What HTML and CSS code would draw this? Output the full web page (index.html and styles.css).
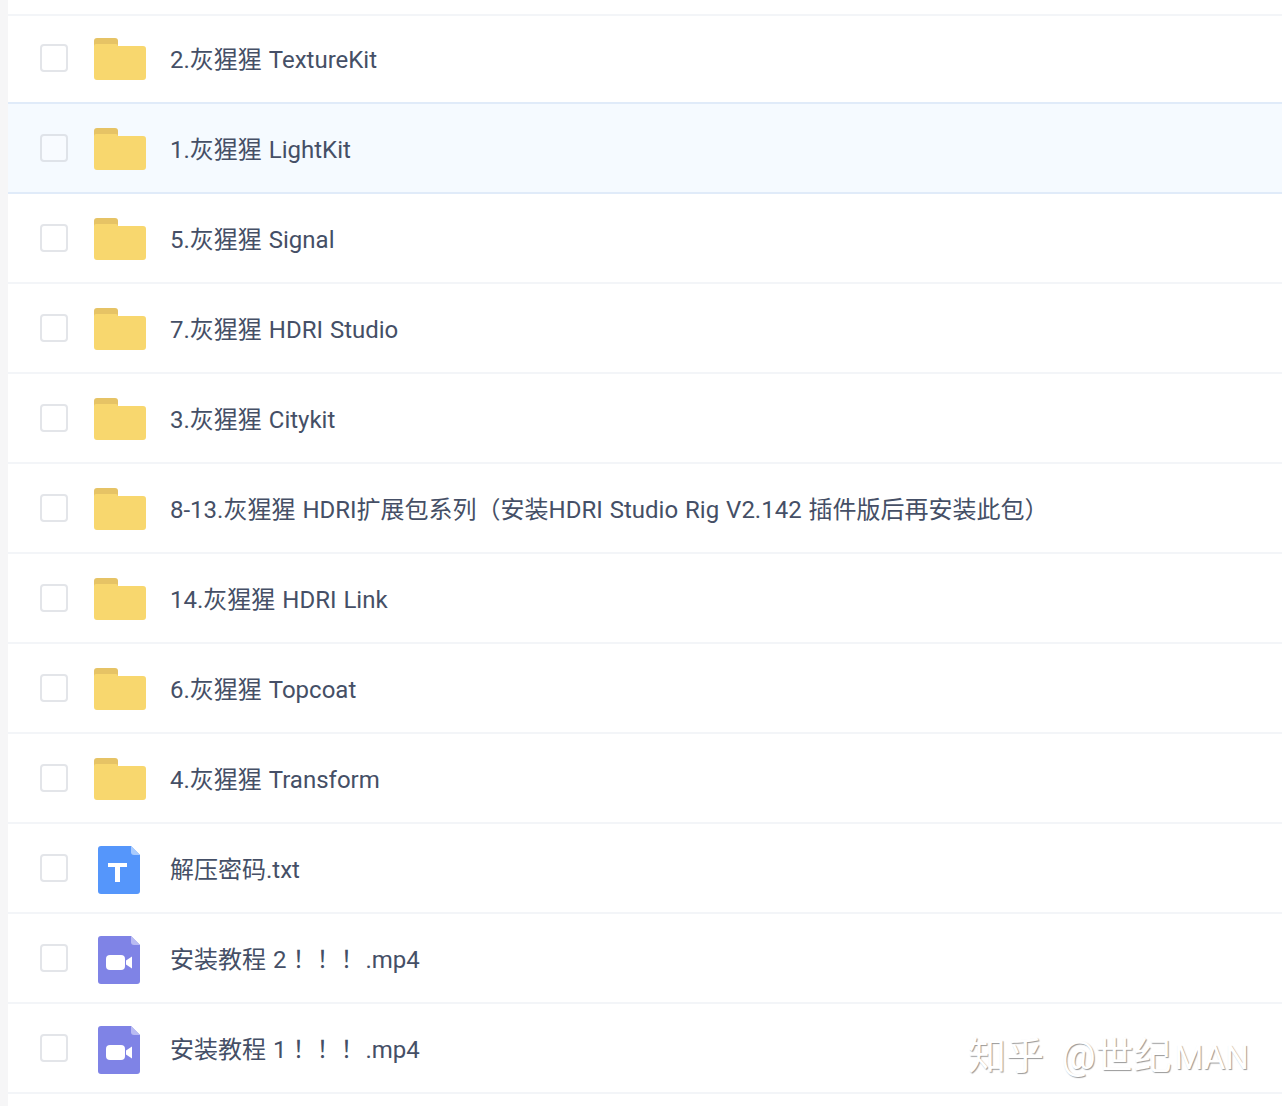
FILE: index.html
```html
<!DOCTYPE html>
<html lang="en">
<head>
    <meta charset="UTF-8">
    <meta name="viewport" content="width=device-width, initial-scale=1.0">
    <title>文件列表</title>
    <link rel="stylesheet" href="styles.css">
</head>
<body>
    <svg class="defs" width="0" height="0">
        <symbol id="folder" viewBox="0 0 52 42">
            <path d="M0 3a3 3 0 0 1 3-3h18a3 3 0 0 1 3 3v5H0z" fill="#e6c365"/>
            <path d="M0 8a2 2 0 0 1 2-2h20a2 2 0 0 1 2 2h25a3 3 0 0 1 3 3v28a3 3 0 0 1-3 3H3a3 3 0 0 1-3-3z" fill="#f8d76e"/>
        </symbol>
        <symbol id="txt" viewBox="0 0 42 48">
            <path d="M3 0h30l9 9v36a3 3 0 0 1-3 3H3a3 3 0 0 1-3-3V3a3 3 0 0 1 3-3z" fill="#5596fb"/>
            <path d="M33 0l9 9h-6a3 3 0 0 1-3-3z" fill="#a9cbfd"/>
            <path d="M10 17h19v4h-7v15h-5V21h-7z" fill="#fff"/>
        </symbol>
        <symbol id="video" viewBox="0 0 42 48">
            <path d="M3 0h30l9 9v36a3 3 0 0 1-3 3H3a3 3 0 0 1-3-3V3a3 3 0 0 1 3-3z" fill="#7f83e6"/>
            <path d="M33 0l9 9h-6a3 3 0 0 1-3-3z" fill="#b9bbf2"/>
            <rect x="8" y="19" width="19" height="15" rx="4" fill="#fff"/>
            <path d="M28 24.500l6-4v12l-6-4z" fill="#fff"/>
        </symbol>
    </svg>

    <div class="file-list">
        <div class="file-row">
            <span class="check"></span>
            <span class="icon"><svg class="icon-folder"><use href="#folder"/></svg></span>
            <span class="name">2.灰猩猩 TextureKit</span>
        </div>
        <div class="file-row active">
            <span class="check"></span>
            <span class="icon"><svg class="icon-folder"><use href="#folder"/></svg></span>
            <span class="name">1.灰猩猩 LightKit</span>
        </div>
        <div class="file-row">
            <span class="check"></span>
            <span class="icon"><svg class="icon-folder"><use href="#folder"/></svg></span>
            <span class="name">5.灰猩猩 Signal</span>
        </div>
        <div class="file-row">
            <span class="check"></span>
            <span class="icon"><svg class="icon-folder"><use href="#folder"/></svg></span>
            <span class="name">7.灰猩猩 HDRI Studio</span>
        </div>
        <div class="file-row">
            <span class="check"></span>
            <span class="icon"><svg class="icon-folder"><use href="#folder"/></svg></span>
            <span class="name">3.灰猩猩 Citykit</span>
        </div>
        <div class="file-row">
            <span class="check"></span>
            <span class="icon"><svg class="icon-folder"><use href="#folder"/></svg></span>
            <span class="name">8-13.灰猩猩 HDRI扩展包系列（安装HDRI Studio Rig V2.142 插件版后再安装此包）</span>
        </div>
        <div class="file-row">
            <span class="check"></span>
            <span class="icon"><svg class="icon-folder"><use href="#folder"/></svg></span>
            <span class="name">14.灰猩猩 HDRI Link</span>
        </div>
        <div class="file-row">
            <span class="check"></span>
            <span class="icon"><svg class="icon-folder"><use href="#folder"/></svg></span>
            <span class="name">6.灰猩猩 Topcoat</span>
        </div>
        <div class="file-row">
            <span class="check"></span>
            <span class="icon"><svg class="icon-folder"><use href="#folder"/></svg></span>
            <span class="name">4.灰猩猩 Transform</span>
        </div>
        <div class="file-row">
            <span class="check"></span>
            <span class="icon"><svg class="icon-file"><use href="#txt"/></svg></span>
            <span class="name">解压密码.txt</span>
        </div>
        <div class="file-row">
            <span class="check"></span>
            <span class="icon"><svg class="icon-file"><use href="#video"/></svg></span>
            <span class="name">安装教程 2<span class="bang">！！！</span> .mp4</span>
        </div>
        <div class="file-row">
            <span class="check"></span>
            <span class="icon"><svg class="icon-file"><use href="#video"/></svg></span>
            <span class="name">安装教程 1<span class="bang">！！！</span> .mp4</span>
        </div>
    </div>

    <div class="watermark">知乎 @世纪<span class="watermark-latin">MAN</span></div>
</body>
</html>
```

FILE: styles.css
```css
* {
    margin: 0;
    padding: 0;
    box-sizing: border-box;
}

html, body {
    height: 1106px;
    overflow: hidden;
}

body {
    position: relative;
    background: #f6f6f7;
    padding-left: 8px;
    font-family: Roboto, "Noto Sans CJK SC", sans-serif;
}

.defs {
    position: absolute;
}

.file-list {
    height: 100%;
    padding-top: 14px;
    background: #fff;
}

.file-row {
    display: flex;
    align-items: center;
    height: 90px;
    padding-left: 32px;
    border-bottom: 2px solid #f3f5f8;
}

.file-row:first-child {
    box-shadow: inset 0 2px 0 #f3f5f8;
    border-bottom-color: #e0ebf9;
}

.file-row.active {
    background: #f5faff;
    border-bottom-color: #e0ebf9;
}

.check {
    width: 28px;
    height: 28px;
    background: #fff;
    border: 2px solid #e3e5e9;
    border-radius: 4px;
}

.active .check {
    background: #f8fbff;
    border-color: #dfe3e9;
}

.icon {
    display: flex;
    width: 52px;
    margin-left: 26px;
}

.icon-folder {
    width: 52px;
    height: 42px;
    margin-top: 2px;
}

.icon-file {
    width: 42px;
    height: 48px;
    margin-top: 4px;
    margin-left: 4px;
}

.name {
    margin-left: 24px;
    padding-bottom: 2px;
    font-size: 24px;
    word-spacing: 1px;
    color: #454f66;
    white-space: nowrap;
}

.bang {
    font-family: "Noto Sans CJK TC", sans-serif;
}

.watermark {
    position: absolute;
    left: 968px;
    top: 1032px;
    font-size: 38px;
    line-height: 48px;
    word-spacing: 8px;
    color: #fff;
    text-shadow: 1px 1px 1px #989898;
    white-space: nowrap;
}

.watermark-latin {
    margin-left: 3px;
    font-size: 33px;
}
```
